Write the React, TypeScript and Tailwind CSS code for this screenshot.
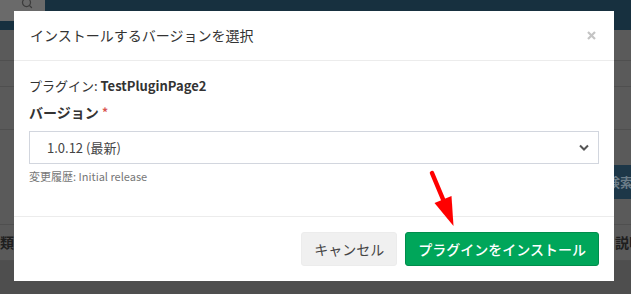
import { Search } from 'lucide-react'

export default function App() {
  return (
    <div className="relative w-[631px] h-[294px] overflow-hidden bg-[#5a5a5a] font-['Noto_Sans_CJK_JP','Noto_Sans',sans-serif]">
      {/* page behind the backdrop */}
      <div className="flex flex-col h-full">
        <div className="h-[30px] bg-[#17303f] shrink-0">
          <div className="w-[45px] h-[21px] bg-[#6a6a6a] flex items-start justify-end pr-[12px] text-[#3c3c3c]">
            <Search size={12} strokeWidth={2.5} className="-mt-[3px]" />
          </div>
        </div>
        <div className="h-[31px] shrink-0 border-b border-[#4f4f4f]" />
        <div className="h-[26px] shrink-0 border-b border-[#4f4f4f]" />
        <div className="h-[43px] shrink-0 border-b border-[#4f4f4f]" />
        <div className="h-[35px] shrink-0" />
        <div className="h-[34px] shrink-0 flex justify-end">
          <div className="w-[26px] bg-[#1d3748] flex items-center pl-[2px] text-[13px] font-bold text-[#6c7d88] whitespace-nowrap overflow-hidden">検索</div>
        </div>
        <div className="h-[26px] shrink-0 border-b border-[#4f4f4f]" />
        <div className="h-[36px] shrink-0 flex justify-between items-center text-[14px] font-bold text-[#1e1e1e] border-b border-[#4f4f4f]">
          <span className="-ml-[14px]">種類</span>
          <span className="-mr-[12px]">説明</span>
        </div>
        <div className="flex-1 bg-[#4e4e4e]" />
      </div>

      {/* modal */}
      <div className="absolute left-[14px] top-[11px] w-[600px] h-[270px] bg-white flex flex-col">
        <div className="h-[50px] shrink-0 border-b border-[#ececec] flex items-center justify-between pl-[16px] pr-[18px]">
          <div className="text-[14px] text-[#333]">インストールするバージョンを選択</div>
          <svg width="9" height="9" viewBox="0 0 9 9" className="text-[#c4c4c4]">
            <path d="M1 1 L8 8 M8 1 L1 8" stroke="currentColor" strokeWidth="2.2" />
          </svg>
        </div>
        <div className="flex-1 px-[15px] pt-[16px]">
          <div className="text-[13px] leading-[18px] text-[#333]">
            プラグイン: <span className="font-bold">TestPluginPage2</span>
          </div>
          <div className="mt-[7px] text-[14px] leading-[20px] font-bold text-[#333]">
            バージョン <span className="text-[#d9534f] text-[12px] align-top">*</span>
          </div>
          <div className="mt-[9px] h-[33px] border border-[#d2d6de] flex items-center justify-between pl-[17px] pr-[9px]">
            <span className="text-[13px] text-[#444]">1.0.12 (最新)</span>
            <svg width="10" height="7" viewBox="0 0 10 7" className="text-[#555]">
              <polyline points="1,1.5 5,5.5 9,1.5" fill="none" stroke="currentColor" strokeWidth="2" />
            </svg>
          </div>
          <div className="mt-[5px] text-[11px] leading-[14px] text-[#777]">変更履歴: Initial release</div>
        </div>
        <div className="shrink-0 border-t border-[#ececec] pt-[15px] pb-[15px] px-[15px] flex justify-end gap-[8px]">
          <button className="h-[34px] px-[12px] rounded-[3px] bg-[#f0f0f0] border border-[#ececec] text-[14px] text-[#444]">キャンセル</button>
          <button className="h-[34px] px-[12px] rounded-[3px] bg-[#00a65a] border border-[#008d4c] text-[14px] font-medium text-white">プラグインをインストール</button>
        </div>
      </div>

      {/* red arrow annotation */}
      <svg className="absolute left-0 top-0" width="631" height="294" viewBox="0 0 631 294">
        <line x1="432" y1="173" x2="445" y2="204" stroke="#ff0000" strokeWidth="4.5" strokeLinecap="round" />
        <polygon points="434.5,203 451.5,196 453.5,226" fill="#ff0000" />
      </svg>
    </div>
  )
}
